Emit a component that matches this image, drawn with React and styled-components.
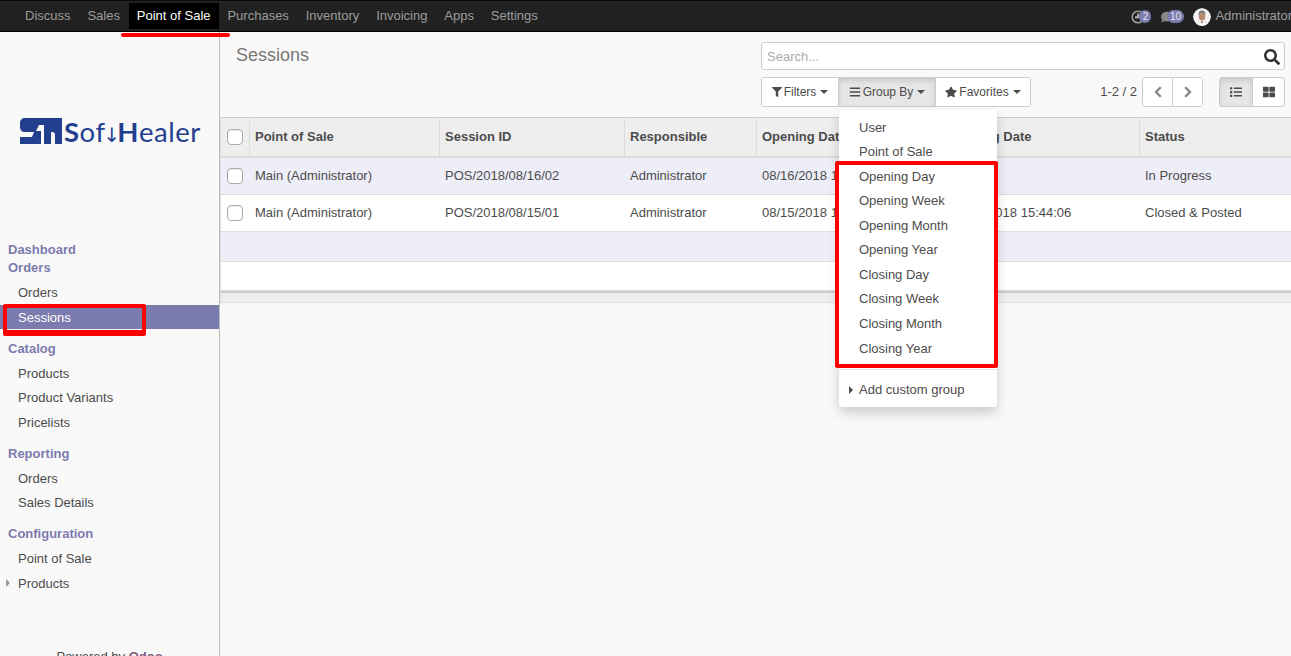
import React from 'react';
import styled, { createGlobalStyle } from 'styled-components';
import { FaFilter, FaBars, FaStar, FaChevronLeft, FaChevronRight, FaList, FaThLarge, FaSearch, FaComment } from 'react-icons/fa';

const GlobalStyle = createGlobalStyle`
  html, body {
    margin: 0;
    height: 100%;
    overflow: hidden;
    background: #f9f9f9;
    font-family: 'Liberation Sans', Arial, sans-serif;
    font-size: 13px;
    line-height: 1.42857;
    color: #4c4c4c;
  }
  * { box-sizing: border-box; }
`;

const topMenu = ['Discuss', 'Sales', 'Point of Sale', 'Purchases', 'Inventory', 'Invoicing', 'Apps', 'Settings'];

const sideMenu = [
  { titles: ['Dashboard', 'Orders'], items: ['Orders', 'Sessions'], gap: 10.4 },
  { titles: ['Catalog'], items: ['Products', 'Product Variants', 'Pricelists'], gap: 10.4 },
  { titles: ['Reporting'], items: ['Orders', 'Sales Details'], gap: 10.4 },
  { titles: ['Configuration'], items: ['Point of Sale', 'Products'], gap: 0 },
];

const sessions = [
  { pos: 'Main (Administrator)', id: 'POS/2018/08/16/02', user: 'Administrator', open: '08/16/2018 15:44:06', close: '', status: 'In Progress', tint: true },
  { pos: 'Main (Administrator)', id: 'POS/2018/08/15/01', user: 'Administrator', open: '08/15/2018 15:40:12', close: '08/15/2018 15:44:06', status: 'Closed & Posted' },
];

const groupOptions = ['User', 'Point of Sale', 'Opening Day', 'Opening Week', 'Opening Month', 'Opening Year', 'Closing Day', 'Closing Week', 'Closing Month', 'Closing Year'];

const Page = styled.div`
  position: relative;
  height: 656px;
  overflow: hidden;
  display: flex;
  flex-direction: column;
`;

const Navbar = styled.nav`
  flex: none;
  height: 32px;
  display: flex;
  align-items: flex-start;
  padding: 3px 0 0 17px;
  background: #212121;
  border-top: 1px solid #0a0a0a;
  border-bottom: 1px solid #000;
  overflow: hidden;
`;

const NavLink = styled.a`
  height: 26px;
  padding: 4px 8px 0;
  margin-top: -1px;
  margin-right: 0.9px;
  color: ${(p) => (p.$active ? '#fff' : '#9d9d9d')};
  background: ${(p) => (p.$active ? '#000' : 'transparent')};
`;

const NavRight = styled.div`
  margin-left: auto;
  margin-right: -1px;
  flex: none;
  display: flex;
  align-items: center;
  height: 26px;
  margin-top: -1px;
  padding-top: 1px;
  color: #9d9d9d;
`;

const SystrayIcon = styled.span`
  position: relative;
  display: flex;
  align-items: center;
  width: ${(p) => p.$width}px;
  height: 16px;
`;

const Badge = styled.span`
  position: absolute;
  top: 1px;
  left: ${(p) => p.$left}px;
  height: 13px;
  min-width: 12px;
  padding: 0 2.5px;
  border-radius: 7px;
  background: #7c7bad;
  color: #e6e6f2;
  font-size: 10px;
  line-height: 13px;
  text-align: center;
`;

const Avatar = styled.svg`
  width: 18px;
  height: 18px;
  margin-right: 4px;
  border-radius: 50%;
  flex: none;
`;

const Body = styled.div`
  flex: 1;
  min-height: 0;
  display: flex;
`;

const Sidebar = styled.aside`
  flex: none;
  width: 220px;
  border-right: 1px solid #bdbdbd;
  background: #f9f9f9;
  overflow: hidden;
`;

const LogoRow = styled.div`
  height: 208.5px;
  padding: 86px 0 0 20px;
  display: flex;
  align-items: flex-start;
  color: #23408f;
`;

const LogoMark = styled.svg`
  width: 42px;
  height: 26px;
  flex: none;
`;

const LogoText = styled.span`
  margin: -3px 0 0 2px;
  font-family: 'Lato', sans-serif;
  font-size: 27.5px;
  line-height: 34px;
  letter-spacing: 0.5px;
  white-space: nowrap;
  b { font-weight: 700; }
`;

const LogoArrow = styled.span`
  font-family: 'DejaVu Sans', sans-serif;
  font-size: 20px;
  letter-spacing: -1px;
  margin: 0 -2px;
`;

const MenuGroup = styled.div`
  margin-bottom: ${(p) => p.$gap}px;
`;

const TitleWrap = styled.div`
  padding-left: 8px;
  margin-bottom: 2.5px;
`;

const MenuTitle = styled.div`
  color: #7c7bad;
  font-weight: 700;
`;

const MenuItem = styled.a`
  position: relative;
  display: block;
  padding: 4px 8px 2px 18px;
  color: ${(p) => (p.$active ? '#fff' : '#4c4c4c')};
  background: ${(p) => (p.$active ? '#7c7bad' : 'transparent')};
`;

const SideCaret = styled.span`
  position: absolute;
  left: 6px;
  top: 8px;
  border-left: 4px solid #9a9a9a;
  border-top: 4px solid transparent;
  border-bottom: 4px solid transparent;
`;

const Powered = styled.div`
  margin-top: 52px;
  text-align: center;
  b { color: #875a7b; }
`;

const Main = styled.main`
  flex: 1;
  min-width: 0;
  display: flex;
  flex-direction: column;
`;

const ControlPanel = styled.div`
  flex: none;
  height: 85px;
  padding: 10px 6px 0 16px;
  display: grid;
  grid-template-columns: 525px 524px;
  grid-template-rows: 28px 30px;
  row-gap: 7px;
`;

const PageTitle = styled.h1`
  margin: 0;
  font-size: 18px;
  font-weight: 400;
  line-height: 26px;
  color: #777;
`;

const SearchBox = styled.div`
  display: flex;
  align-items: center;
  justify-content: space-between;
  padding: 2px 4px 0 5px;
  background: #fff;
  border: 1px solid #ccc;
  border-radius: 3px;
  color: #aaa;
  svg { color: #333; font-size: 16px; }
`;

const ButtonRow = styled.div`
  grid-column: 2;
  display: flex;
  align-items: stretch;
`;

const BtnGroup = styled.div`
  display: flex;
  margin-left: ${(p) => p.$left || 0}px;
`;

const Btn = styled.button`
  width: ${(p) => p.$width}px;
  height: 30px;
  margin-left: -1px;
  padding: 0;
  display: flex;
  align-items: center;
  justify-content: center;
  gap: 2px;
  font-family: inherit;
  font-size: 12px;
  color: ${(p) => (p.$muted ? '#888' : '#4c4c4c')};
  background: ${(p) => (p.$on ? '#e6e6e6' : '#fff')};
  border: 1px solid #ccc;
  box-shadow: ${(p) => (p.$on ? 'inset 0 3px 5px rgba(0,0,0,.125)' : 'none')};
  &:first-child { margin-left: 0; border-radius: 3px 0 0 3px; }
  &:last-child { border-radius: 0 3px 3px 0; }
  svg { flex: none; }
`;

const Chevron = styled.span`
  display: flex;
  svg { stroke: currentColor; stroke-width: 30; }
`;

const Caret = styled.span`
  margin-left: 2px;
  border-top: 4px solid #4c4c4c;
  border-left: 4px solid transparent;
  border-right: 4px solid transparent;
`;

const Pager = styled.span`
  margin-left: auto;
  align-self: center;
  margin-right: 5px;
`;

const TableWrap = styled.div`
  border-left: 1px solid #ddd;
`;

const Table = styled.table`
  width: 1071px;
  table-layout: fixed;
  border-collapse: collapse;
  background: #fff;
`;

const HeadRow = styled.tr`
  height: 39px;
  background: #eee;
  border-top: 1px solid #ccc;
  border-bottom: 2px solid #ddd;
`;

const Th = styled.th`
  padding: 2px 5px 0 5.5px;
  text-align: left;
  font-weight: 700;
  border-left: 1px solid #ddd;
  white-space: nowrap;
  overflow: hidden;
  &:first-child { border-left: 0; padding: 0 5px; }
`;

const Row = styled.tr`
  height: ${(p) => p.$height}px;
  background: ${(p) => (p.$tint ? '#eeeef8' : '#fff')};
  border-bottom: 1px solid #ddd;
`;

const Td = styled.td`
  padding: ${(p) => (p.$low ? 2 : 0)}px 5px 0 6px;
  white-space: nowrap;
  overflow: hidden;
  &:first-child { padding: 0 5px; }
`;

const Check = styled.span`
  display: block;
  width: 16px;
  height: 16px;
  margin-left: 1px;
  background: #fff;
  border: 1px solid #aaa;
  border-radius: 4px;
  box-shadow: inset 0 1px 1px rgba(0,0,0,.08);
`;

const TableFooter = styled.div`
  height: 12px;
  background: #eee;
  border-top: 2px solid #ccc;
  border-bottom: 1px solid #ddd;
`;

const Dropdown = styled.div`
  position: absolute;
  left: 839px;
  top: 110px;
  width: 158px;
  padding: 5.5px 0 4.5px;
  background: #fff;
  border-radius: 3px;
  box-shadow: 0 6px 12px rgba(0,0,0,.175);
`;

const DropItem = styled.div`
  position: relative;
  padding: 3px 20px;
  white-space: nowrap;
`;

const DropDivider = styled.div`
  height: 1px;
  margin: 8px 0;
  background: #e5e5e5;
`;

const DropCaret = styled.span`
  position: absolute;
  left: 10px;
  top: 8px;
  border-left: 4px solid #4c4c4c;
  border-top: 4px solid transparent;
  border-bottom: 4px solid transparent;
`;

const Callout = styled.div`
  position: absolute;
  left: ${(p) => p.$left}px;
  top: ${(p) => p.$top}px;
  width: ${(p) => p.$width}px;
  height: ${(p) => p.$height}px;
  border: 4px solid #f00;
  border-bottom-width: ${(p) => p.$bottom || 4}px;
  border-radius: 2px;
  pointer-events: none;
`;

const Underline = styled.div`
  position: absolute;
  left: 121px;
  top: 33px;
  width: 109px;
  height: 4px;
  background: #f00;
  border-radius: 2px;
`;

const colWidths = [28, 190, 185, 132, 190, 193, 153];

function App() {
  return (
    <Page>
      <GlobalStyle />
      <Navbar>
        {topMenu.map((label) => (
          <NavLink key={label} $active={label === 'Point of Sale'}>{label}</NavLink>
        ))}
        <NavRight>
          <SystrayIcon $width={30}>
            <svg width="14" height="14" viewBox="0 0 14 14" fill="none" stroke="#9d9d9d" strokeWidth="1.6">
              <circle cx="7" cy="7" r="5.8" />
              <path d="M7 3.4V7.4H4" stroke="#c8c8c8" />
            </svg>
            <Badge $left={8}>2</Badge>
          </SystrayIcon>
          <SystrayIcon $width={32}>
            <FaComment size={12} color="#8a8a8a" />
            <Badge $left={6}>10</Badge>
          </SystrayIcon>
          <Avatar viewBox="0 0 18 18">
            <circle cx="9" cy="9" r="9" fill="#f4f4f4" />
            <path d="M3 18c.5-3.500 3-4.500 6-4.500s5.500 1 6 4.500z" fill="#fff" stroke="#bbb" strokeWidth=".5" />
            <path d="M8 13.500h2L9 16z" fill="#8a4a3a" />
            <ellipse cx="9" cy="8" rx="3.300" ry="4.500" fill="#b98a73" />
            <path d="M5.600 7C5.400 3.500 7 2.500 9 2.500s3.600 1 3.400 4.500c-.6-1.800-1.800-2.300-3.400-2.300S6.200 5.200 5.600 7z" fill="#777" />
          </Avatar>
          Administrator
        </NavRight>
      </Navbar>
      <Body>
        <Sidebar>
          <LogoRow>
            <LogoMark viewBox="0 0 42 26">
              <path fill="currentColor" d="M5 0H42V26H35V17C35 15 34 14 32 14H31V26H24V7H19L16 13H21V26H0V19H12L14 14H5C2 14 0 12 0 9V5C0 2 2 0 5 0Z" />
            </LogoMark>
            <LogoText><b>S</b>of<LogoArrow>↓</LogoArrow><b>H</b>ealer</LogoText>
          </LogoRow>
          {sideMenu.map((group) => (
            <MenuGroup key={group.titles[0]} $gap={group.gap}>
              <TitleWrap>
                {group.titles.map((title) => (
                  <MenuTitle key={title}>{title}</MenuTitle>
                ))}
              </TitleWrap>
              {group.items.map((item) => (
                <MenuItem key={item} $active={item === 'Sessions'}>
                  {group.gap === 0 && item === 'Products' && <SideCaret />}
                  {item}
                </MenuItem>
              ))}
            </MenuGroup>
          ))}
          <Powered>Powered by <b>Odoo</b></Powered>
        </Sidebar>
        <Main>
          <ControlPanel>
            <PageTitle>Sessions</PageTitle>
            <SearchBox>
              Search...
              <FaSearch />
            </SearchBox>
            <ButtonRow>
              <BtnGroup>
                <Btn $width={78}><FaFilter size={10} />Filters<Caret /></Btn>
                <Btn $width={98} $on><FaBars size={12} />Group By<Caret /></Btn>
                <Btn $width={96}><FaStar size={12} />Favorites<Caret /></Btn>
              </BtnGroup>
              <Pager>1-2 / 2</Pager>
              <BtnGroup>
                <Btn $width={31} $muted><Chevron><FaChevronLeft size={12} /></Chevron></Btn>
                <Btn $width={31} $muted><Chevron><FaChevronRight size={12} /></Chevron></Btn>
              </BtnGroup>
              <BtnGroup $left={16}>
                <Btn $width={34} $on><FaList size={12} /></Btn>
                <Btn $width={33}><FaThLarge size={12} /></Btn>
              </BtnGroup>
            </ButtonRow>
          </ControlPanel>
          <TableWrap>
            <Table>
              <colgroup>
                {colWidths.map((w, i) => <col key={i} width={w} />)}
              </colgroup>
              <thead>
                <HeadRow>
                  <Th><Check /></Th>
                  <Th>Point of Sale</Th>
                  <Th>Session ID</Th>
                  <Th>Responsible</Th>
                  <Th>Opening Date</Th>
                  <Th>Closing Date</Th>
                  <Th>Status</Th>
                </HeadRow>
              </thead>
              <tbody>
                {sessions.map((s) => (
                  <Row key={s.id} $height={s.tint ? 38 : 37} $tint={s.tint}>
                    <Td><Check /></Td>
                    <Td $low={s.tint}>{s.pos}</Td>
                    <Td $low={s.tint}>{s.id}</Td>
                    <Td $low={s.tint}>{s.user}</Td>
                    <Td $low={s.tint}>{s.open}</Td>
                    <Td $low={s.tint}>{s.close}</Td>
                    <Td $low={s.tint}>{s.status}</Td>
                  </Row>
                ))}
                <Row $height={30} $tint><Td colSpan={7} /></Row>
                <Row $height={29}><Td colSpan={7} /></Row>
              </tbody>
            </Table>
            <TableFooter />
          </TableWrap>
        </Main>
      </Body>
      <Dropdown>
        {groupOptions.map((option) => (
          <DropItem key={option}>{option}</DropItem>
        ))}
        <DropDivider />
        <DropItem><DropCaret />Add custom group</DropItem>
      </Dropdown>
      <Underline />
      <Callout $left={3} $top={304} $width={143} $height={32} $bottom={6} />
      <Callout $left={835} $top={161} $width={163} $height={207} />
    </Page>
  );
}

export default App;
